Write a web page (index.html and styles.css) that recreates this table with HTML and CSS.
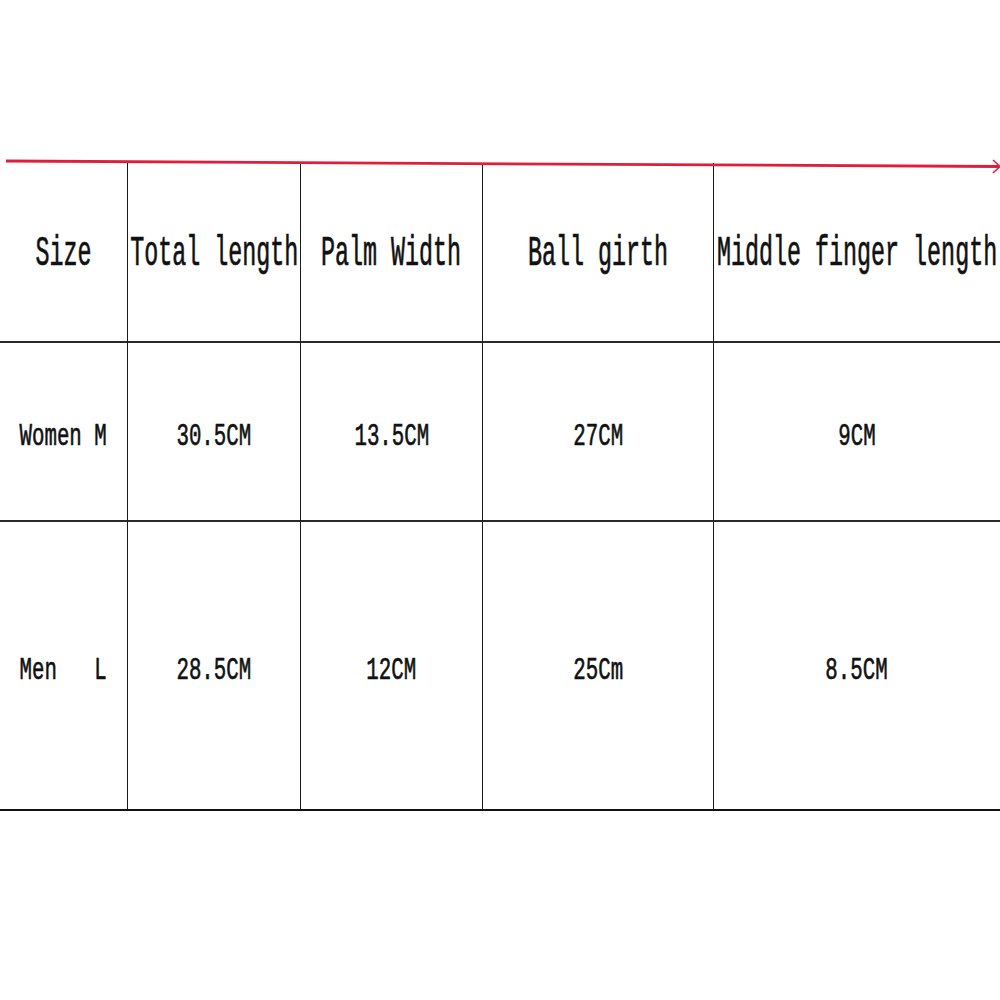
FILE: index.html
```html
<!DOCTYPE html>
<html>
<head>
<meta charset="utf-8">
<link rel="stylesheet" href="styles.css">
</head>
<body>
<div class="page">
  <svg class="arrow" width="1000" height="200" viewBox="0 0 1000 200">
    <line x1="6" y1="161" x2="999" y2="166.5" stroke="#e01d3a" stroke-width="2.8"/>
    <polyline points="993,160 1000,166.5 993,173" fill="none" stroke="#e01d3a" stroke-width="1.6"/>
  </svg>
  <div class="chart">
    <div class="cell head"><span class="t">Size</span></div>
    <div class="cell head"><span class="t">Total length</span></div>
    <div class="cell head"><span class="t">Palm Width</span></div>
    <div class="cell head"><span class="t">Ball girth</span></div>
    <div class="cell head last"><span class="t">Middle finger length</span></div>

    <div class="cell row2"><span class="b">Women M</span></div>
    <div class="cell row2"><span class="b">30.5CM</span></div>
    <div class="cell row2"><span class="b">13.5CM</span></div>
    <div class="cell row2"><span class="b">27CM</span></div>
    <div class="cell row2 last"><span class="b">9CM</span></div>

    <div class="cell row3"><span class="b">Men   L</span></div>
    <div class="cell row3"><span class="b">28.5CM</span></div>
    <div class="cell row3"><span class="b">12CM</span></div>
    <div class="cell row3"><span class="b">25Cm</span></div>
    <div class="cell row3 last"><span class="b">8.5CM</span></div>
  </div>
</div>
</body>
</html>
```

FILE: styles.css
```css
html, body {
  margin: 0;
  padding: 0;
  background: #ffffff;
}

.page {
  position: relative;
  width: 1000px;
  height: 1000px;
  padding-top: 163px;
  box-sizing: border-box;
  overflow: hidden;
}

.arrow {
  position: absolute;
  top: 0;
  left: 0;
  z-index: 2;
}

.chart {
  display: grid;
  grid-template-columns: 128px 173px 182px 231px 286px;
  grid-template-rows: 180px 179px 289px;
}

.cell {
  box-sizing: border-box;
  border-right: 1px solid #1a1a1a;
  border-bottom: 2px solid #2a2a2a;
  display: flex;
  align-items: center;
  justify-content: center;
  font-family: "Liberation Mono", "Courier New", monospace;
  color: #111;
  white-space: pre;
}

.cell.last {
  border-right: none;
}

.row3 {
  border-bottom-color: #111;
}

.t {
  display: inline-block;
  font-size: 42px;
  font-weight: normal;
  -webkit-text-stroke: 0.7px #111;
  line-height: 1;
  transform: scaleX(0.556);
  transform-origin: center;
  margin-top: 4px;
}

.b {
  display: inline-block;
  font-size: 31px;
  font-weight: normal;
  -webkit-text-stroke: 0.6px #111;
  line-height: 1;
  transform: scaleX(0.67);
  transform-origin: center;
  margin-top: 10px;
}
```
